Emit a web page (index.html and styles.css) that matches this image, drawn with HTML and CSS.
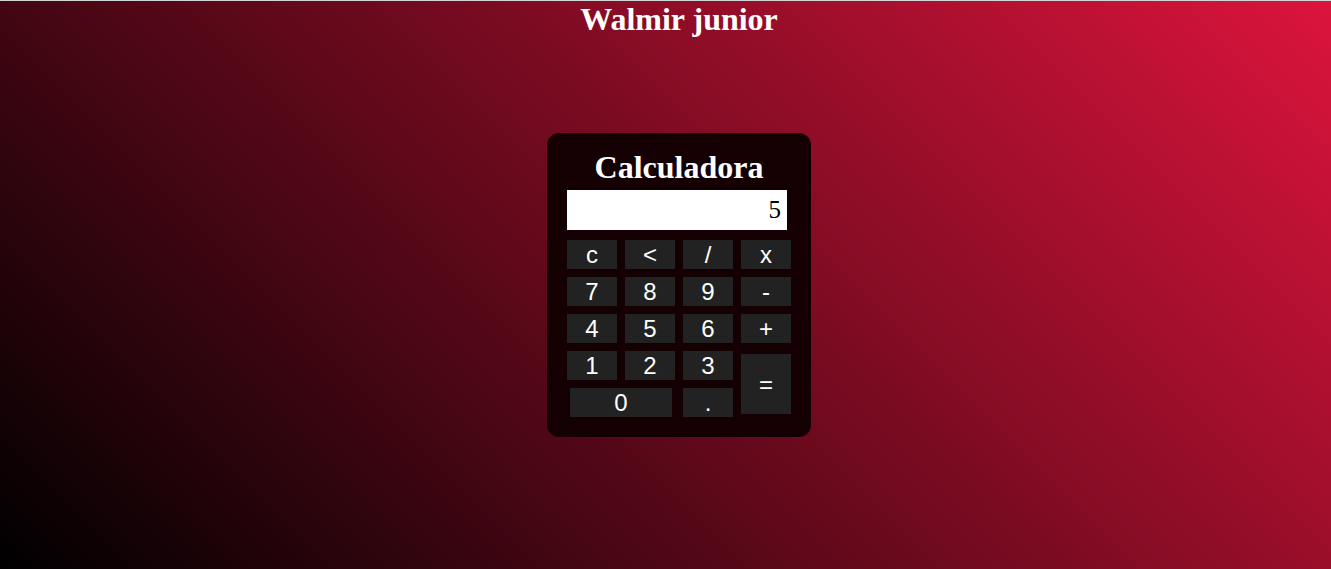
FILE: index.html
```html
<!DOCTYPE html>
<html lang="pt">
<head>
<meta charset="utf-8">
<title>Calculadora</title>
<link rel="stylesheet" href="styles.css">
</head>
<body>
<div class="page">
  <h1 class="title">Walmir junior</h1>
  <div class="stage">
    <div class="calc">
      <h2 class="calc-title">Calculadora</h2>
      <div class="display">5</div>
      <div class="keys">
        <button class="key">c</button>
        <button class="key">&lt;</button>
        <button class="key">/</button>
        <button class="key">x</button>
        <button class="key">7</button>
        <button class="key">8</button>
        <button class="key">9</button>
        <button class="key">-</button>
        <button class="key">4</button>
        <button class="key">5</button>
        <button class="key">6</button>
        <button class="key">+</button>
        <button class="key">1</button>
        <button class="key">2</button>
        <button class="key">3</button>
        <button class="key key-eq">=</button>
        <button class="key key-zero">0</button>
        <button class="key">.</button>
      </div>
    </div>
  </div>
</div>
</body>
</html>
```

FILE: styles.css
```css
html, body {
  margin: 0;
  padding: 0;
  height: 100%;
}

body {
  background: linear-gradient(45deg, #000000, #dc143c);
  border-top: 1px solid #d4d4d4;
  box-sizing: border-box;
  overflow: hidden;
  font-family: "Liberation Serif", "Times New Roman", serif;
}

.page {
  height: 568px;
  display: grid;
  grid-template-rows: 36px 1fr 36px;
  padding-left: 27px;
}

.title {
  margin: 0;
  font-size: 32px;
  line-height: 37px;
  font-weight: bold;
  color: #ffffff;
  text-align: center;
}

.stage {
  display: flex;
  align-items: center;
  justify-content: center;
}

.calc {
  width: 264px;
  height: 304px;
  box-sizing: border-box;
  padding: 16px 20px 20px;
  background: #140003;
  border-radius: 12px;
}

.calc-title {
  margin: 0 0 4px;
  font-size: 32px;
  line-height: 37px;
  font-weight: bold;
  color: #ffffff;
  text-align: center;
}

.display {
  width: 220px;
  height: 40px;
  box-sizing: border-box;
  background: #ffffff;
  color: #000000;
  font-size: 25px;
  line-height: 40px;
  text-align: right;
  padding-right: 6px;
  margin-bottom: 10px;
}

.keys {
  display: grid;
  grid-template-columns: repeat(4, 50px);
  grid-auto-rows: 29px;
  gap: 8px;
}

.key {
  border: none;
  padding: 0;
  margin: 0;
  background: #222222;
  color: #ffffff;
  font-family: "Liberation Sans", Arial, sans-serif;
  font-size: 24px;
  line-height: 29px;
  text-align: center;
}

.key-eq {
  grid-column: 4;
  grid-row: 4 / span 2;
  margin: 3px 0;
}

.key-zero {
  grid-column: 1 / span 2;
  grid-row: 5;
  margin: 0 3px;
}
```
